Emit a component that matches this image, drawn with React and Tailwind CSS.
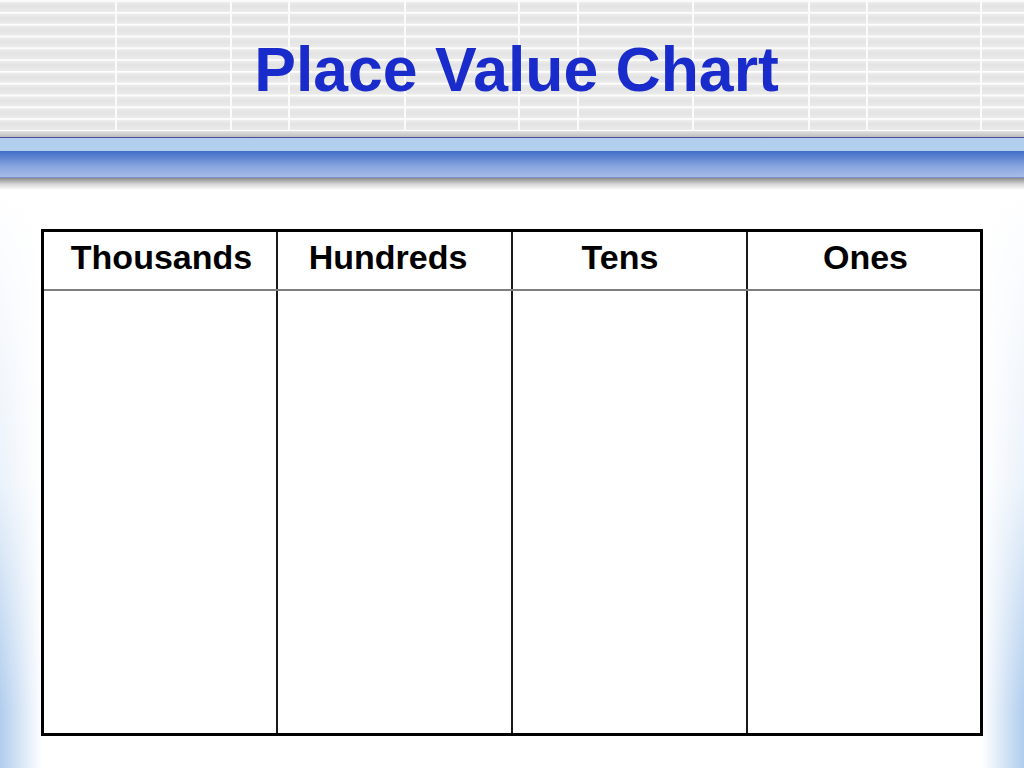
import React from "react";

const vLines = [115, 230, 288, 404, 518, 577, 692, 808, 866, 980];

const columns = [
  { label: "Thousands", shift: "pl-[3px]" },
  { label: "Hundreds", shift: "pr-[13px]" },
  { label: "Tens", shift: "pr-[19px]" },
  { label: "Ones", shift: "pl-[3px]" },
];

function HeaderPattern() {
  return (
    <svg
      className="absolute inset-0 h-full w-full"
      viewBox="0 0 1024 137"
      preserveAspectRatio="none"
    >
      <defs>
        <linearGradient id="band" x1="0" y1="0" x2="0" y2="1">
          <stop offset="0" stopColor="#f0f0f0" />
          <stop offset="0.5" stopColor="#e3e3e3" />
          <stop offset="1" stopColor="#ebebeb" />
        </linearGradient>
        <pattern
          id="stripes"
          width="1024"
          height="11.8"
          y="0.2"
          patternUnits="userSpaceOnUse"
        >
          <rect width="1024" height="11.8" fill="url(#band)" />
          <rect width="1024" height="1.6" fill="#ffffff" />
        </pattern>
        <linearGradient id="shade" x1="0" y1="0" x2="0" y2="1">
          <stop offset="0" stopColor="#e2e2e2" />
          <stop offset="1" stopColor="#bdbdbd" />
        </linearGradient>
      </defs>
      <rect width="1024" height="137" fill="url(#stripes)" />
      {vLines.map((x) => (
        <rect key={x} x={x} y="0" width="2" height="137" fill="#fbfbfb" />
      ))}
      <rect x="0" y="131" width="1024" height="6" fill="url(#shade)" />
    </svg>
  );
}

export default function App() {
  return (
    <div className="relative min-h-[768px] w-full overflow-hidden bg-white font-['Liberation_Sans',Arial,sans-serif]">
      {/* side glow */}
      <div className="absolute left-0 top-[190px] bottom-0 w-[42px] bg-linear-to-r from-[#b0cdee] to-transparent">
        <div className="h-full w-full bg-linear-to-b from-white via-white/75 via-50% to-transparent to-90%" />
      </div>
      <div className="absolute right-0 top-[190px] bottom-0 w-[42px] bg-linear-to-l from-[#b0cdee] to-transparent">
        <div className="h-full w-full bg-linear-to-b from-white via-white/75 via-50% to-transparent to-90%" />
      </div>

      <div className="relative flex flex-col">
        <header className="relative h-[137px]">
          <HeaderPattern />
          <h1 className="relative pt-[38px] pl-[9px] text-center text-[62.5px] leading-[63px] font-bold text-[#1a2bcc]">
            Place Value Chart
          </h1>
        </header>

        <div className="h-[1px] bg-[#4b4b99]" />
        <div className="h-[13px] bg-[#b3cfee]" />
        <div className="h-[26px] bg-linear-to-b from-[#416dc6] via-[#8aa6e0] via-60% to-[#a6bce8]" />
        <div className="h-[1px] bg-[#7b8ec6]" />
        <div className="h-[12px] bg-linear-to-b from-[#8c8c8c] via-[#d4d4d4] to-white" />

        <div className="relative ml-[41px] mt-[39px] flex h-[507px] w-[942px] flex-col border-[3px] border-black bg-white">
          <div className="grid h-[59px] grid-cols-[234px_235px_235px_1fr] border-b-2 border-[#7f7f7f]">
            {columns.map((c, i) => (
              <div
                key={c.label}
                className={`pt-[8px] text-center text-[34px] leading-[34px] font-bold text-black ${c.shift} ${
                  i < 3 ? "border-r-2 border-[#1a1a1a]" : ""
                }`}
              >
                {c.label}
              </div>
            ))}
          </div>
          <div className="grid flex-1 grid-cols-[234px_235px_235px_1fr]">
            {columns.map((c, i) => (
              <div
                key={c.label}
                className={i < 3 ? "border-r-2 border-[#1a1a1a]" : ""}
              />
            ))}
          </div>
        </div>
      </div>
    </div>
  );
}
